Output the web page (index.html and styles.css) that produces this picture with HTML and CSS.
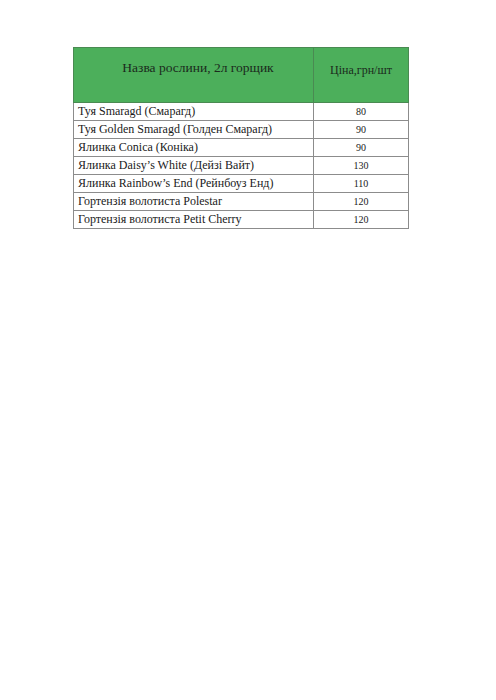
FILE: index.html
```html
<!DOCTYPE html>
<html lang="uk">
<head>
<meta charset="utf-8">
<link rel="stylesheet" href="styles.css">
</head>
<body>
<div class="page">
<table class="price">
  <thead>
    <tr>
      <th class="name-h"><div class="hcell hcell-name">Назва рослини, 2л горщик</div></th>
      <th class="price-h"><div class="hcell hcell-price">Ціна,грн/шт</div></th>
    </tr>
  </thead>
  <tbody>
    <tr><td class="name">Туя Smaragd (Смарагд)</td><td class="num">80</td></tr>
    <tr><td class="name">Туя Golden Smaragd (Голден Смарагд)</td><td class="num">90</td></tr>
    <tr><td class="name">Ялинка Conica (Коніка)</td><td class="num">90</td></tr>
    <tr><td class="name">Ялинка Daisy’s White (Дейзі Вайт)</td><td class="num">130</td></tr>
    <tr><td class="name">Ялинка Rainbow’s End (Рейнбоуз Енд)</td><td class="num">110</td></tr>
    <tr><td class="name">Гортензія волотиста Polestar</td><td class="num">120</td></tr>
    <tr><td class="name">Гортензія волотиста Petit Cherry</td><td class="num">120</td></tr>
  </tbody>
</table>
</div>
</body>
</html>
```

FILE: styles.css
```css
html, body {
  margin: 0;
  padding: 0;
  background: #ffffff;
}
.page {
  padding: 47px 0 0 73px;
  font-family: "Liberation Serif", "Times New Roman", serif;
  color: #1a1a1a;
}
.price {
  border-collapse: collapse;
  width: 336px;
  table-layout: fixed;
}
.price th, .price td {
  border: 1px solid #8c8c8c;
  padding: 0;
}
.price thead th {
  background: #4caf5b;
  font-weight: normal;
  color: #1b2a1c;
  text-align: center;
  vertical-align: top;
  border-color: #4a8a52;
}
.name-h {
  width: 239px;
}
.hcell {
  box-sizing: border-box;
  height: 54px;
}
.hcell-name {
  font-size: 13.5px;
  line-height: 16px;
  padding-top: 12px;
  padding-left: 9px;
}
.hcell-price {
  font-size: 12px;
  line-height: 14px;
  padding-top: 15px;
}
.price td {
  height: 17px;
  font-size: 12px;
  line-height: 17px;
}
.price td.name {
  padding-left: 4px;
  white-space: nowrap;
}
.price td.num {
  text-align: center;
  font-size: 10px;
}
```
